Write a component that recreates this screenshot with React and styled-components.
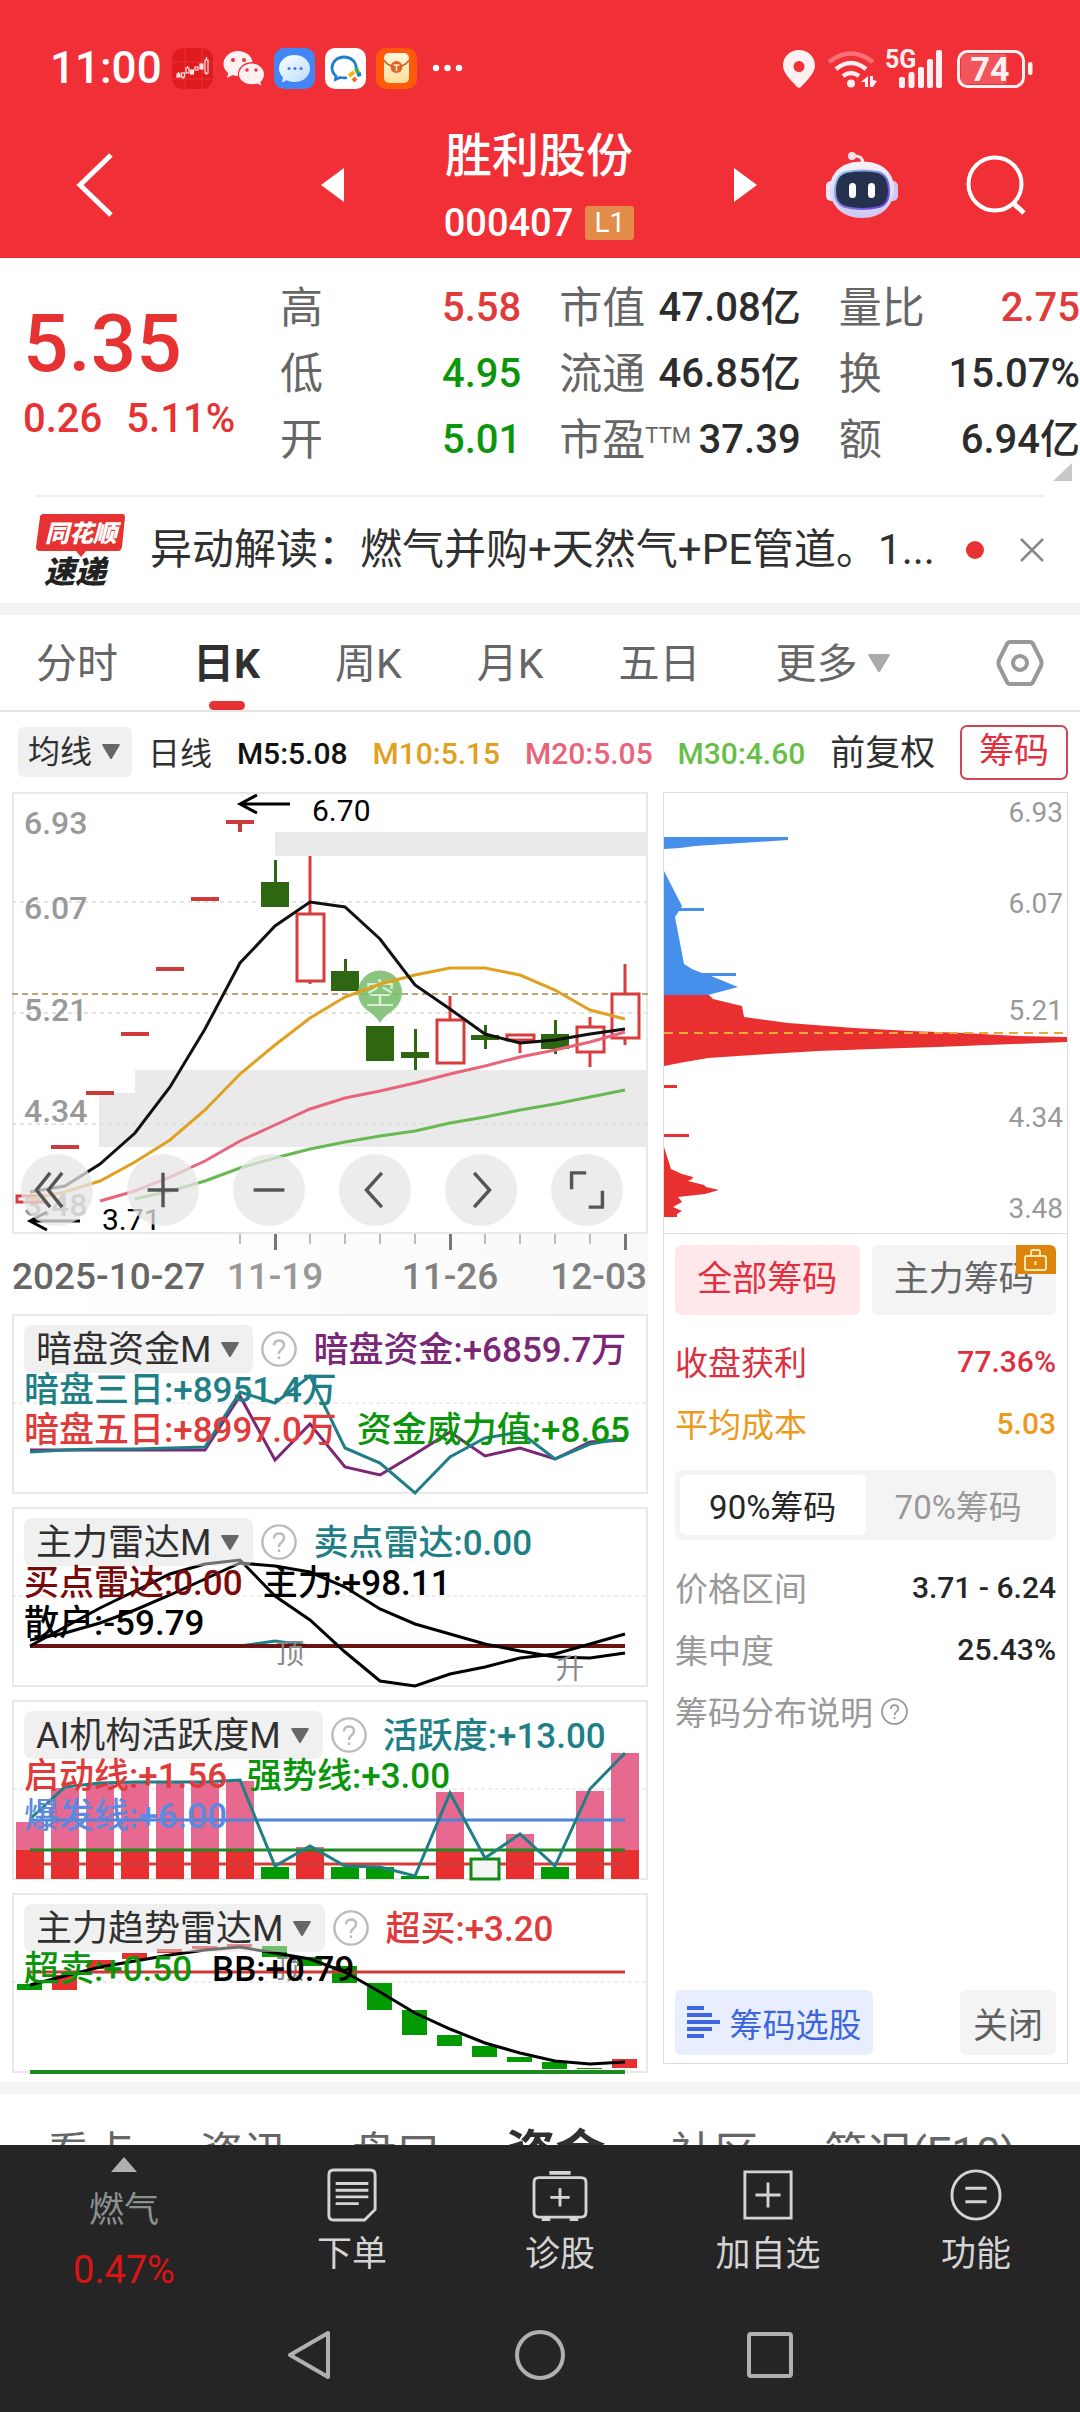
import React, { useState } from "react";
import styled, { createGlobalStyle } from "styled-components";

const GlobalStyle = createGlobalStyle`
    * {
        box-sizing: border-box;
    }

    body {
        margin: 0;
        background: #fff;
        color: #303030;
        font-family: Roboto, "Noto Sans CJK SC", sans-serif;
    }

    button {
        border: none;
        padding: 0;
        margin: 0;
        background: none;
        color: inherit;
        font: inherit;
        cursor: pointer;
    }

    svg {
        display: block;
        flex: none;
        overflow: visible;
    }
`

const RED = "#e03a3a";
const GREEN = "#0a960a";
const TEAL = "#1f7f87";

const Page = styled.div`
    display: flex;
    flex-direction: column;
    height: 100vh;
    overflow: hidden;
`

const Content = styled.main`
    flex: 1;
    min-height: 0;
    overflow: hidden;
`

/* ---------- header ---------- */

const Header = styled.header`
    background: #f12f37;
    color: #fff;
    height: 258px;
    padding-top: 48px;
`

const StatusBar = styled.div`
    display: flex;
    align-items: center;
    justify-content: space-between;
    height: 41px;
    padding: 0 46px 0 50px;
`

const StatusSide = styled.div`
    display: flex;
    align-items: center;
    gap: 10px;
`

const Clock = styled.span`
    font-size: 44px;
    line-height: 41px;
    font-weight: 500;
`

const TitleBar = styled.div`
    display: flex;
    align-items: center;
    justify-content: space-between;
    height: 146px;
    margin-top: 23px;
    padding: 0 54px 0 76px;
`

const TitleGroup = styled.div`
    display: flex;
    align-items: center;
    justify-content: space-between;
    width: 436px;
    margin-left: 138px;
`

const StockTitle = styled.div`
    padding-top: 12px;
    text-align: center;
`

const StockName = styled.h1`
    margin: 0;
    font-size: 47px;
    line-height: 60px;
    font-weight: 500;
`

const StockCode = styled.div`
    display: flex;
    align-items: center;
    justify-content: center;
    gap: 12px;
    margin-top: 4px;
    font-size: 38px;
    line-height: 66px;
    font-weight: 500;
`

const LevelTag = styled.span`
    width: 49px;
    height: 34px;
    border-radius: 3px;
    background: #e38b48;
    font-size: 28px;
    line-height: 34px;
    font-weight: 400;
    text-align: center;
`

const Tools = styled.div`
    display: flex;
    align-items: center;
    gap: 68px;
`

/* ---------- quote ---------- */

const Quote = styled.section`
    position: relative;
    display: flex;
    height: 237px;
    padding-top: 17px;
`

const PriceBlock = styled.div`
    flex: none;
    width: 280px;
    padding-left: 23px;
    color: #e63232;
`

const Price = styled.div`
    margin-top: 24px;
    font-size: 80px;
    line-height: 90px;
    font-weight: 500;
`

const Change = styled.div`
    display: flex;
    gap: 24px;
    margin-top: 5px;
    font-size: 40px;
    line-height: 50px;
    font-weight: 500;
`

const Stats = styled.dl`
    flex: 1;
    display: grid;
    grid-template-columns: repeat(3, 1fr);
    grid-auto-rows: 66px;
    column-gap: 38px;
    margin: 0;
`

const Stat = styled.div`
    display: flex;
    align-items: center;
    justify-content: space-between;
    white-space: nowrap;

    dt {
        color: #666;
        font-size: 43px;
        line-height: 60px;
    }

    sup {
        font-size: 22px;
        line-height: 22px;
        vertical-align: 12px;
    }

    dd {
        margin: 0;
        color: ${(props) => props.color || "#2c2c2c"};
        font-size: 40px;
        line-height: 60px;
        font-weight: 500;
    }
`

const Corner = styled.svg`
    position: absolute;
    right: 8px;
    bottom: 14px;
`

const News = styled.section`
    display: flex;
    align-items: center;
    height: 108px;
    margin: 0 36px;
    border-top: 2px solid #eee;
`

const NewsLink = styled.a`
    flex: 1;
    min-width: 0;
    margin-left: 24px;
    color: #303030;
    font-size: 42px;
    line-height: 60px;
    text-decoration: none;
    white-space: nowrap;
`

const Dot = styled.span`
    width: 18px;
    height: 18px;
    margin-right: 36px;
    border-radius: 50%;
    background: #e63232;
`

const Band = styled.div`
    height: 12px;
    background: #f4f4f4;
`

/* ---------- period tabs ---------- */

const Periods = styled.nav`
    display: flex;
    align-items: center;
    gap: 75px;
    height: 97px;
    padding: 0 36px;
    border-bottom: 2px solid #e6e6e6;
`

const Period = styled.button`
    position: relative;
    display: flex;
    align-items: center;
    gap: 10px;
    height: 95px;
    padding-top: 2px;
    color: ${(props) => (props.$on ? "#303030" : "#666")};
    font-size: 41px;
    line-height: 60px;
    font-weight: ${(props) => (props.$on ? 700 : 400)};
    white-space: nowrap;

    &::after {
        content: "";
        display: ${(props) => (props.$on ? "block" : "none")};
        position: absolute;
        left: 50%;
        bottom: 0;
        width: 36px;
        height: 9px;
        margin-left: -18px;
        border-radius: 5px;
        background: #e63232;
    }
`

const Gear = styled.button`
    margin-left: auto;
`

const MaRow = styled.div`
    display: flex;
    align-items: center;
    justify-content: space-between;
    height: 80px;
    padding: 0 12px 0 18px;
    font-size: 30px;
    line-height: 50px;
    white-space: nowrap;
`

const MaGroup = styled.div`
    display: flex;
    align-items: center;
    gap: 16px;
    font-size: 32px;
`

const MaPicker = styled.button`
    display: flex;
    align-items: center;
    gap: 10px;
    height: 50px;
    padding: 0 12px 0 10px;
    border-radius: 6px;
    background: #f0f0f0;
    color: #303030;
`

const MaDay = styled.span`
    padding-top: 4px;
`

const MaValue = styled.span`
    padding-top: 3px;
    color: ${(props) => props.color};
    font-weight: 500;
`

const Adjust = styled.button`
    padding-top: 4px;
    font-size: 35px;
`

const ChipToggle = styled.button`
    width: 108px;
    height: 55px;
    border: 2px solid #cf4552;
    border-radius: 7px;
    color: #e0303f;
    font-size: 35px;
`

/* ---------- charts ---------- */

const Board = styled.section`
    display: grid;
    grid-template-columns: 636fr 405fr;
    column-gap: 15px;
    padding: 0 12px 9px;
`

const Charts = styled.div`
    min-width: 0;
`

const Frame = styled.div`
    position: relative;
    box-shadow: inset 0 0 0 2px #e8e8e8;
    margin-bottom: ${(props) => props.$gap || 0}px;
`

const Plot = styled.svg`
    width: 100%;
    height: auto;
    font-family: Roboto, "Noto Sans CJK SC", sans-serif;
`

const Axis = styled(Plot)`
    background: linear-gradient(to right, #fff, #f9f9f9);
`

const ChartTools = styled.div`
    position: absolute;
    left: 0;
    right: 0;
    bottom: 8px;
    display: flex;
    justify-content: space-between;
    padding: 0 25px 0 9px;
`

const RoundButton = styled.button`
    display: flex;
    align-items: center;
    justify-content: center;
    width: 72px;
    height: 72px;
    border-radius: 50%;
    background: rgba(230, 230, 230, 0.75);
`

const Overlay = styled.div`
    position: absolute;
    left: 0;
    right: 0;
    top: 15px;
    padding-left: 12px;
    font-size: 35px;
    line-height: 40px;
    white-space: nowrap;
`

const LegendRow = styled.div`
    display: flex;
    align-items: center;
    gap: 20px;
    height: 40px;
`

const PickerGroup = styled.div`
    display: flex;
    align-items: center;
    gap: 8px;
    margin-right: -4px;
`

const IndicatorPicker = styled.button`
    display: flex;
    align-items: center;
    gap: 10px;
    height: 48px;
    padding: 2px 14px 0 12px;
    border-radius: 8px;
    background: rgba(226, 226, 226, 0.5);
    color: #303030;
    font-size: 36px;
`

/* ---------- chip panel ---------- */

const ChipPanel = styled.aside`
    display: flex;
    flex-direction: column;
    min-width: 0;
    margin-bottom: 9px;
    border: 1px solid #ddd;
`

const ChipBody = styled.div`
    flex: 1;
    display: flex;
    flex-direction: column;
    padding: 11px 11px 8px;
    border-top: 1px solid #ddd;
`

const ChipTabs = styled.div`
    display: grid;
    grid-template-columns: 1fr 1fr;
    gap: 12px;
    margin-bottom: 15px;
`

const ChipTab = styled.button`
    position: relative;
    height: 70px;
    border-radius: 6px;
    background: ${(props) => (props.$on ? "#ffe8ea" : "#f4f4f4")};
    color: ${(props) => (props.$on ? "#e0303f" : "#666")};
    font-size: 35px;
    line-height: 70px;
`

const Lock = styled.span`
    position: absolute;
    top: 0;
    right: 0;
    display: flex;
    align-items: center;
    justify-content: center;
    width: 40px;
    height: 29px;
    border-radius: 0 6px 0 0;
    background: #dc840c;
`

const ChipRow = styled.div`
    display: flex;
    align-items: center;
    justify-content: space-between;
    height: 62px;
    color: ${(props) => props.color || "#999"};
    font-size: 33px;

    strong {
        color: ${(props) => props.color || "#262626"};
        font-size: 30px;
        font-weight: 500;
    }
`

const Note = styled.button`
    display: flex;
    align-items: center;
    gap: 8px;
`

const Segment = styled.div`
    display: grid;
    grid-template-columns: 1fr 1fr;
    height: 70px;
    margin: 16px 0;
    padding: 5px;
    border-radius: 8px;
    background: #f4f4f4;
`

const SegmentItem = styled.button`
    border-radius: 5px;
    background: ${(props) => (props.$on ? "#fff" : "none")};
    color: ${(props) => (props.$on ? "#262626" : "#999")};
    font-size: 33px;
`

const ChipFooter = styled.div`
    display: flex;
    justify-content: space-between;
    margin-top: auto;
`

const PickStock = styled.button`
    display: flex;
    align-items: center;
    justify-content: center;
    gap: 10px;
    width: 198px;
    height: 65px;
    border-radius: 6px;
    background: #e8eefe;
    color: #3d66dc;
    font-size: 33px;
`

const Close = styled.button`
    width: 96px;
    height: 65px;
    border-radius: 6px;
    background: #f4f4f4;
    color: #606060;
    font-size: 35px;
`

/* ---------- bottom ---------- */

const Sections = styled.nav`
    display: flex;
    align-items: center;
    justify-content: space-between;
    height: 120px;
    padding: 0 64px 0 46px;
`

const SectionTab = styled.button`
    color: ${(props) => (props.$on ? "#303030" : "#666")};
    font-size: ${(props) => (props.$on ? 50 : 44)}px;
    line-height: 72px;
    font-weight: ${(props) => (props.$on ? 700 : 400)};
`

const Dock = styled.footer`
    flex: none;
    background: #252525;
    color: #d4d4d4;
`

const DockRow = styled.nav`
    display: grid;
    grid-template-columns: 248fr repeat(4, 208fr);
    height: 156px;
`

const DockItem = styled.button`
    display: flex;
    flex-direction: column;
    align-items: center;
    padding-top: 24px;
    font-size: 35px;
    line-height: 50px;

    svg {
        margin-bottom: 9px;
    }
`

const Sector = styled.button`
    display: flex;
    flex-direction: column;
    align-items: center;
    padding-top: 12px;
    color: #8a928e;
    font-size: 35px;
    line-height: 50px;

    strong {
        margin-top: 9px;
        color: #dc1414;
        font-size: 38px;
        font-weight: 400;
    }

    svg {
        margin-bottom: 14px;
    }
`

const SystemNav = styled.div`
    display: flex;
    align-items: center;
    justify-content: center;
    gap: 180px;
    height: 111px;
    padding-bottom: 4px;
`

const SystemButton = styled.button`
    width: 50px;
    height: 50px;
`

/* ---------- icons ---------- */

function Caret({ size = 18, color = "#666" }) {
    return (
        <svg width={size} height={size * 0.85} viewBox="0 0 20 17">
            <path d="M1 0h18q1.4 0.3 0.6 1.6L11 16q-1 1.4-2 0L0.4 1.6Q-0.4 0.3 1 0z" fill={color} />
        </svg>
    )
}

function Help({ size = 36, color = "#bbb" }) {
    return (
        <svg width={size} height={size} viewBox="0 0 36 36" fill="none" stroke={color} strokeWidth="2.4">
            <circle cx="18" cy="18" r="16.6" />
            <path d="M13 14.5q0-5 5-5t5 4.6q0 2.6-2.6 4.4t-2.4 4.5" />
            <path d="M18 25.4v2.6" />
        </svg>
    )
}

function AppIcons() {
    return (
        <svg width="292" height="41" viewBox="0 0 292 41">
            <defs>
                <linearGradient id="bubble" x1="0" y1="0" x2="1" y2="1">
                    <stop offset="0" stopColor="#fff" />
                    <stop offset="1" stopColor="#b9dcff" />
                </linearGradient>
                <linearGradient id="letter" x1="0" y1="0" x2="0" y2="1">
                    <stop offset="0" stopColor="#fff6dc" />
                    <stop offset="1" stopColor="#ffdf9a" />
                </linearGradient>
            </defs>
            <rect width="41" height="41" rx="11" fill="#e01b1f" />
            <path d="M0 14h41M0 31h41M13 0v41M30 0v41" stroke="#e73434" strokeWidth="1" />
            <g stroke="#ffe3e0" strokeWidth="1.2" fill="none">
                <rect x="5" y="26" width="3" height="3" fill="#ffe3e0" />
                <rect x="9.5" y="25" width="3" height="4" />
                <path d="M11 29v2M6.5 24v2" />
                <rect x="14" y="20" width="3" height="5" />
                <path d="M15.5 18v2" />
                <rect x="18.5" y="22" width="3" height="4" fill="#ffe3e0" />
                <rect x="23" y="19" width="3" height="3" />
                <rect x="28" y="16" width="3" height="5" fill="#ffe3e0" />
                <rect x="33" y="12" width="3" height="13" />
                <path d="M34.5 9v3M34.5 25v2" />
            </g>
            <g fill="#fff1f2">
                <path d="M66 3c8 0 14 5 14.5 11-9 0-15.5 6-14.500 14-2 0-4-.2-5.500-.8L55 30l1.200-5C53 22.500 51.500 19.500 51.500 16 51.500 9 58 3 66 3z" />
                <path d="M79.500 15.500c7 0 12.500 4.800 12.500 10.800 0 3.200-1.400 5.800-3.700 7.700l1 3.500-4.200-2c-1.700.6-3.500.8-5.600.8-7 0-12.500-4.400-12.500-10s5.500-10.800 12.500-10.800z" />
            </g>
            <g fill="#f12f37">
                <circle cx="61" cy="12" r="2" />
                <circle cx="72" cy="12" r="2" />
                <circle cx="75" cy="22" r="1.7" />
                <circle cx="84" cy="22" r="1.7" />
            </g>
            <rect x="102" width="41" height="41" rx="10" fill="#4285f4" />
            <path d="M122.500 7c9 0 15.500 6 15.500 13.500S131.500 34 122.500 34c-3 0-5.500-.6-8-1.800l-4.500 2.200 1-5c-2.500-2.400-4-5.400-4-8.900C107 13 113.500 7 122.500 7z" fill="url(#bubble)" />
            <g fill="#3f7ee0">
                <circle cx="117" cy="20.5" r="1.6" />
                <circle cx="123" cy="20.5" r="1.6" />
                <circle cx="129" cy="20.5" r="1.6" />
            </g>
            <rect x="153" width="41" height="41" rx="10" fill="#fff" />
            <path d="M184 20c.5-6-5-11-12-11s-12 5-12 11c0 3.500 1.600 6 4 8l-.5 3.500 4.500-2c3 .7 5 .6 7 0" fill="none" stroke="#1c7fd0" strokeWidth="2.8" />
            <path d="M184 20l2 5" stroke="#3fae49" strokeWidth="4" />
            <path d="M177 28l5-4" stroke="#f7b500" strokeWidth="4" />
            <path d="M181 33l3-3" stroke="#f0642d" strokeWidth="4" />
            <path d="M185 27l4-1" stroke="#1c7fd0" strokeWidth="4" />
            <rect x="204" width="41" height="41" rx="10" fill="#ff5a0a" />
            <rect x="212" y="5" width="25" height="30" rx="5" fill="url(#letter)" />
            <path d="M212 12q3 5 8 6M237 12q-3 5-8 6" fill="none" stroke="#c8662a" strokeWidth="1.5" />
            <circle cx="224.5" cy="19" r="6" fill="#dc6428" />
            <path d="M221.500 17h6M224.500 17v6" stroke="#ffe7b8" strokeWidth="1.6" />
            <g fill="#fff">
                <circle cx="264" cy="20" r="3.2" />
                <circle cx="275.5" cy="20" r="3.2" />
                <circle cx="287" cy="20" r="3.2" />
            </g>
        </svg>
    )
}

function StatusIcons() {
    return (
        <svg width="252" height="38" viewBox="0 0 252 38" fill="#fff1f2">
            <path fillRule="evenodd" d="M17 0c9 0 16 6.500 16 15.500C33 24 23 32 19 37q-2 1.500-4 0C11 32 1 24 1 15.500 1 6.500 8 0 17 0zm0 11a5.500 5.500 0 1 0 0 11 5.500 5.500 0 0 0 0-11z" />
            <g fill="none" stroke="#fff1f2" strokeWidth="4.5">
                <path d="M47 12q22-17 44 0" opacity="0.35" />
                <path d="M54 19q15-12 30 0" />
                <path d="M61 26q8-6 16 0" />
            </g>
            <circle cx="69" cy="33.5" r="4" />
            <path d="M86 26v11h-3v-5l-4 0zM88 37V26l0 0h3v4l4 1-4 6z" />
            <text x="103" y="18" fontSize="25" fontWeight="700" fontFamily="Roboto, sans-serif">5G</text>
            <rect x="117" y="27" width="6" height="11" rx="2" />
            <rect x="126.5" y="22" width="6" height="16" rx="2" />
            <rect x="136" y="17" width="6" height="21" rx="2" />
            <rect x="145" y="9" width="6" height="29" rx="2" />
            <rect x="154" y="0" width="6" height="38" rx="2" />
            <rect x="179" y="4" width="46" height="30" rx="4" opacity="0.2" />
            <rect x="176.5" y="1.5" width="65" height="35" rx="9" fill="none" stroke="#fff1f2" strokeWidth="3" />
            <text x="208" y="31" fontSize="34" fontWeight="700" textAnchor="middle" fontFamily="Roboto, sans-serif">74</text>
            <rect x="246" y="12" width="4.5" height="13" rx="2" />
        </svg>
    )
}

function Robot() {
    return (
        <svg width="72" height="66" viewBox="0 0 72 66">
            <defs>
                <linearGradient id="shell" x1="0" y1="0" x2="0" y2="1">
                    <stop offset="0" stopColor="#f8f2fb" />
                    <stop offset="1" stopColor="#cdc8f3" />
                </linearGradient>
                <linearGradient id="rim" x1="0" y1="0" x2="1" y2="1">
                    <stop offset="0" stopColor="#8fd3e6" />
                    <stop offset="1" stopColor="#6a35d8" />
                </linearGradient>
            </defs>
            <path d="M27 4q10-1 10 8" fill="none" stroke="#f2e4f2" strokeWidth="3" />
            <circle cx="26" cy="4" r="4" fill="#f6dfe8" />
            <rect x="0" y="29" width="12" height="20" rx="5" fill="#ece6f8" />
            <rect x="60" y="29" width="12" height="20" rx="5" fill="#cfc6f2" />
            <path d="M36 9.500c20 0 32 11 32 27 0 17-12 29.500-32 29.500S4 53.500 4 36.500c0-16 12-27 32-27z" fill="url(#shell)" />
            <path d="M20 20q16-3 32 0 11 3 11 19 0 13-10 16-17 4-34 0Q9 52 9 39q0-16 11-19z" fill="#26304f" stroke="url(#rim)" strokeWidth="2" />
            <rect x="23" y="31" width="7" height="15" rx="3.5" fill="#fff" />
            <rect x="42" y="31" width="7" height="15" rx="3.5" fill="#fff" />
        </svg>
    )
}

/* ---------- chart data (y values on each plot's own scale) ---------- */

const x = (i) => 18 + 35 * i;
const line = (ys, from = 0) => ys.map((y, i) => `${x(i + from)},${y}`).join(" ");

const candles = [
    { i: 0, type: "up", top: 404, bottom: 410, high: 404, low: 410 },
    { i: 1, type: "flat", top: 355 },
    { i: 2, type: "flat", top: 301 },
    { i: 3, type: "flat", top: 242 },
    { i: 4, type: "flat", top: 177 },
    { i: 5, type: "flat", top: 107 },
    { i: 6, type: "flat", top: 30, low: 40 },
    { i: 7, type: "down", top: 90, bottom: 115, high: 68, low: 115 },
    { i: 8, type: "up", top: 122, bottom: 189, high: 64, low: 192 },
    { i: 9, type: "down", top: 179, bottom: 199, high: 167, low: 199 },
    { i: 10, type: "down", top: 234, bottom: 269, high: 234, low: 269 },
    { i: 11, type: "down", top: 260, bottom: 266, high: 237, low: 278 },
    { i: 12, type: "up", top: 228, bottom: 271, high: 204, low: 271 },
    { i: 13, type: "down", top: 243, bottom: 248, high: 233, low: 257 },
    { i: 14, type: "up", top: 243, bottom: 248, high: 243, low: 261 },
    { i: 15, type: "down", top: 242, bottom: 257, high: 228, low: 262 },
    { i: 16, type: "up", top: 235, bottom: 260, high: 225, low: 275 },
    { i: 17, type: "up", top: 202, bottom: 246, high: 172, low: 253 },
]

const averages = [
    { color: "#e0a020", from: 0, ys: [407, 400, 389, 370, 348, 318, 282, 253, 226, 205, 192, 183, 176, 176, 183, 198, 218, 227] },
    { color: "#111", from: 0, ys: [400, 394, 372, 341, 295, 237, 171, 134, 110, 115, 147, 193, 217, 242, 251, 248, 242, 237] },
    { color: "#e8647a", from: 2, ys: [409, 399, 385, 369, 349, 333, 317, 306, 299, 291, 282, 274, 265, 258, 250, 240] },
    { color: "#67b952", from: 3, ys: [407, 399, 389, 376, 366, 357, 350, 344, 339, 331, 325, 318, 312, 305, 298] },
]

const priceLabels = [["6.93", 42], ["6.07", 127], ["5.21", 229], ["4.34", 330], ["3.48", 424]]
const chipLabels = [["6.93", 29], ["6.07", 120], ["5.21", 227], ["4.34", 334], ["3.48", 425]]

const activity = [122, 88, 83, 83, 83, 83, 81, 0, 147, 0, 0, 0, 92, 0, 134, 0, 91, 53]
const quiet = { 7: 167, 9: 167, 10: 167, 11: 176, 15: 167 }

const trend = [
    ["g", 91, 97], ["r", 82, 97], ["r", 67, 76], ["r", 60, 66], ["r", 56, 60], ["r", 53, 56],
    ["r", 51, 54], ["g", 53, 64], ["g", 64, 73], ["g", 73, 90], ["g", 90, 117], ["g", 117, 142],
    ["g", 142, 153], ["g", 153, 164], ["g", 164, 169], ["g", 169, 176], ["g", 175, 176], ["r", 166, 175],
]

const stats = [
    { label: "高", value: "5.58", color: RED },
    { label: "市值", value: "47.08亿" },
    { label: "量比", value: "2.75", color: RED },
    { label: "低", value: "4.95", color: GREEN },
    { label: "流通", value: "46.85亿" },
    { label: "换", value: "15.07%" },
    { label: "开", value: "5.01", color: GREEN },
    { label: "市盈", sup: "TTM", value: "37.39" },
    { label: "额", value: "6.94亿" },
]

function Candle({ i, type, top, bottom, high, low }) {
    const cx = x(i);
    if (type === "flat") {
        return (
            <g fill="#cc3a3a">
                <rect x={cx - 14} y={top - 2} width="28" height="4" />
                {low && <rect x={cx - 2} y={top} width="4" height={low - top} />}
            </g>
        )
    }
    if (type === "down") {
        return (
            <g fill="#2f6612">
                <rect x={cx - 1} y={high} width="3" height={low - high} />
                <rect x={cx - 14} y={top} width="28" height={bottom - top} />
            </g>
        )
    }
    return (
        <g stroke="#d83c3c" strokeWidth="3" fill="none">
            <path d={`M${cx} ${high}V${top}M${cx} ${bottom}V${low}`} />
            <rect x={cx - 13} y={top} width="27" height={bottom - top} />
        </g>
    )
}

function KLine() {
    return (
        <Plot viewBox="0 0 636 442">
            <path d="M263 40H636V64H263zM123 278H636V355H87V301H123z" fill="#eaeaea" />
            <path d="M0 110H636M0 221H636M0 332H636" stroke="#e2e2e2" strokeWidth="2" strokeDasharray="4 4" />
            <path d="M0 202H636" stroke="#bba673" strokeWidth="2" strokeDasharray="6 4" />
            {priceLabels.map(([label, y]) => (
                <text key={label} x="12" y={y} fontSize="32" fontWeight="500" fill="#999">{label}</text>
            ))}
            {candles.map((candle) => <Candle key={candle.i} {...candle} />)}
            <path d="M368 231Q364 224 356 219A22 22 0 1 1 380 219Q372 224 368 231z" fill="#7cbf70" opacity="0.9" />
            <text x="368" y="212" fontSize="30" textAnchor="middle" fill="#d8efd4">空</text>
            {averages.map((avg) => (
                <polyline key={avg.color} points={line(avg.ys, avg.from)} fill="none" stroke={avg.color} strokeWidth="3" />
            ))}
            <path d="M278 12H228M245 3L228 12L245 21M68 429H18M35 420L18 429L35 438" fill="none" stroke="#000" strokeWidth="3" />
            <text x="300" y="29" fontSize="30">6.70</text>
            <text x="90" y="438" fontSize="30">3.71</text>
        </Plot>
    )
}

function DateAxis() {
    const ticks = [6, 7, 8, 9, 10, 11, 12, 13, 14, 15, 16, 17]
    return (
        <Axis viewBox="0 0 636 80" fontSize="37" fontWeight="500">
            {ticks.map((i) => (
                <rect key={i} x={x(i) - 1} y="0" width={i % 5 === 2 ? 3 : 2} height={i % 5 === 2 ? 16 : 10} fill={i % 5 === 2 ? "#777" : "#bbb"} />
            ))}
            <text x="0" y="55" fill="#666">2025-10-27</text>
            <text x="263" y="55" fill="#999" textAnchor="middle">11-19</text>
            <text x="438" y="55" fill="#808080" textAnchor="middle">11-26</text>
            <text x="635" y="55" fill="#808080" textAnchor="end">12-03</text>
        </Axis>
    )
}

function Indicator({ name, rows, gap, children }) {
    return (
        <Frame $gap={gap}>
            <Plot viewBox="0 0 636 180">
                <path d="M0 89H636" stroke="#ddd" strokeWidth="1" strokeDasharray="4 3" />
                {children}
            </Plot>
            <Overlay>
                {rows.map((row, i) => (
                    <LegendRow key={i}>
                        {i === 0 && (
                            <PickerGroup>
                                <IndicatorPicker>{name}<Caret /></IndicatorPicker>
                                <Help />
                            </PickerGroup>
                        )}
                        {row.map(([text, color]) => <MaValue key={text} color={color}>{text}</MaValue>)}
                    </LegendRow>
                ))}
            </Overlay>
        </Frame>
    )
}

function Indicators() {
    return (
        <>
            <Indicator
                name="暗盘资金M"
                gap={13}
                rows={[
                    [["暗盘资金:+6859.7万", "#7b2676"]],
                    [["暗盘三日:+8951.4万", TEAL]],
                    [["暗盘五日:+8997.0万", RED], ["资金威力值:+8.65", GREEN]],
                ]}
            >
                <g fill="none" strokeWidth="3">
                    <polyline points={line([136, 136, 136, 136, 136, 136, 82, 146, 110, 153, 161, 140, 118, 142, 134, 145, 128, 126])} stroke="#7b2676" />
                    <polyline points={line([138, 136, 135, 135, 134, 133, 78, 89, 62, 134, 149, 179, 143, 124, 118, 145, 130, 124])} stroke={TEAL} />
                </g>
            </Indicator>
            <Indicator
                name="主力雷达M"
                gap={13}
                rows={[
                    [["卖点雷达:0.00", TEAL]],
                    [["买点雷达:0.00", "#7a0a0a"], ["主力:+98.11", "#000"]],
                    [["散户:-59.79", "#000"]],
                ]}
            >
                <path d={`M${x(6)} 139L${x(7)} 134L${x(8)} 139`} fill="none" stroke={TEAL} strokeWidth="3" />
                <path d="M18 139H613" stroke="#6b1414" strokeWidth="4" />
                <g fill="none" stroke="#000" strokeWidth="3">
                    <polyline points={line([139, 120, 101, 84, 67, 57, 53, 89, 113, 145, 174, 179, 167, 160, 151, 147, 137, 127])} />
                    <polyline points={line([133, 126, 116, 103, 88, 72, 56, 59, 65, 80, 102, 117, 127, 137, 144, 150, 151, 146])} />
                </g>
                <text x="264" y="157" fontSize="28" fill="#888">顶</text>
                <text x="544" y="172" fontSize="28" fill="#888">升</text>
            </Indicator>
            <Indicator
                name="AI机构活跃度M"
                gap={13}
                rows={[
                    [["活跃度:+13.00", TEAL]],
                    [["启动线:+1.56", RED], ["强势线:+3.00", GREEN]],
                    [["爆发线:+6.00", "#5b8ae0"]],
                ]}
            >
                {activity.map((top, i) => top > 0 && (
                    <g key={i}>
                        <rect x={x(i) - 14} y={top} width="28" height={179 - top} fill="#e8698f" />
                        <rect x={x(i) - 14} y="150" width="28" height="29" fill="#e83030" />
                    </g>
                ))}
                {Object.keys(quiet).map((i) => (
                    <rect key={i} x={x(Number(i)) - 14} y={quiet[i]} width="28" height={179 - quiet[i]} fill="#049a04" />
                ))}
                <path d="M18 164H613" stroke="#d43c3c" strokeWidth="3" />
                <rect x={x(13) - 14} y="159" width="28" height="20" fill="#f4f4f4" stroke="#128a12" strokeWidth="3" />
                <path d="M18 120H613" stroke="#4d84dc" strokeWidth="3" />
                <path d="M18 150H613" stroke="#1f8a1f" strokeWidth="3" />
                <polyline points={line([119, 87, 83, 82, 82, 82, 80, 166, 146, 166, 167, 176, 93, 158, 134, 166, 89, 53])} fill="none" stroke={TEAL} strokeWidth="3" />
            </Indicator>
            <Indicator
                name="主力趋势雷达M"
                rows={[
                    [["超买:+3.20", RED]],
                    [["超卖:+0.50", GREEN], ["BB:+0.79", "#000"]],
                ]}
            >
                {trend.map(([kind, top, bottom], i) => (
                    <rect key={i} x={x(i) - 13} y={top} width="25" height={bottom - top} fill={kind === "r" ? "#e83030" : "#049a04"} />
                ))}
                <text x="264" y="86" fontSize="28" fill="#888">顶</text>
                <path d="M18 79H613" stroke="#cc3a3a" strokeWidth="3" />
                <path d="M18 179H613" stroke="#1f8a1f" strokeWidth="4" />
                <polyline points={line([92, 83, 74, 68, 62, 57, 54, 60, 66, 79, 99, 120, 136, 150, 160, 168, 171, 169])} fill="none" stroke="#000" strokeWidth="3" />
            </Indicator>
        </>
    )
}

function ChipChart() {
    return (
        <Plot viewBox="0 0 403 440">
            <g fill="#4690ec">
                <path d="M0 44H124V47L93 49 62 51 31 53 16 55 0 56z" />
                <path d="M0 78L18 113 17 115H40V118H15L11 124 20 171 28 176 38 180H72V183H47L74 194 44 202H0z" />
            </g>
            <g fill="#e83030">
                <path d="M0 202H45L49 206 78 213 80 224 124 230 190 235 246 238 299 240 354 243 403 244V249L349 251 273 254 209 256 154 258 104 261 44 265 21 269 0 273z" />
                <path d="M0 292H13V295H0zM0 341H25V344H0z" />
                <path d="M0 354L7 376 18 381 29 384 28 386 24 388 40 392 42 394 55 397 41 401 14 404 18 409 9 414 18 418 13 421V424H0z" />
            </g>
            <path d="M0 240H403" stroke="#e8a83a" strokeWidth="2" strokeDasharray="9 6" />
            {chipLabels.map(([label, y]) => (
                <text key={label} x="399" y={y} fontSize="28" textAnchor="end" fill="#999">{label}</text>
            ))}
        </Plot>
    )
}

function Chips() {
    const [range, setRange] = useState("90%筹码");

    return (
        <ChipPanel>
            <ChipChart />
            <ChipBody>
                <ChipTabs>
                    <ChipTab $on>全部筹码</ChipTab>
                    <ChipTab>
                        主力筹码
                        <Lock>
                            <svg width="24" height="22" viewBox="0 0 24 22" fill="none" stroke="#ffe9b0" strokeWidth="2">
                                <rect x="1" y="7" width="21" height="14" rx="2" />
                                <path d="M7 7V3q0-2 2-2h5q2 0 2 2v4M11.500 12v4" />
                            </svg>
                        </Lock>
                    </ChipTab>
                </ChipTabs>
                <ChipRow color="#dc303f">收盘获利<strong>77.36%</strong></ChipRow>
                <ChipRow color="#eb9a20">平均成本<strong>5.03</strong></ChipRow>
                <Segment>
                    {["90%筹码", "70%筹码"].map((item) => (
                        <SegmentItem key={item} $on={item === range} onClick={() => setRange(item)}>{item}</SegmentItem>
                    ))}
                </Segment>
                <ChipRow>价格区间<strong>3.71 - 6.24</strong></ChipRow>
                <ChipRow>集中度<strong>25.43%</strong></ChipRow>
                <ChipRow><Note>筹码分布说明<Help size={27} color="#999" /></Note></ChipRow>
                <ChipFooter>
                    <PickStock>
                        <svg width="33" height="33" viewBox="0 0 33 33" fill="none" stroke="#3d66e0" strokeWidth="4">
                            <path d="M0 2h17M0 9h25M0 16h33M0 23h25M0 30h17" />
                        </svg>
                        筹码选股
                    </PickStock>
                    <Close>关闭</Close>
                </ChipFooter>
            </ChipBody>
        </ChipPanel>
    )
}

function TopBar() {
    return (
        <Header>
            <StatusBar>
                <StatusSide>
                    <Clock>11:00</Clock>
                    <AppIcons />
                </StatusSide>
                <StatusIcons />
            </StatusBar>
            <TitleBar>
                <button aria-label="返回">
                    <svg width="38" height="64" viewBox="0 0 38 64" fill="none" stroke="#fff" strokeWidth="5">
                        <path d="M35 2L4 32 35 62" />
                    </svg>
                </button>
                <TitleGroup>
                    <button aria-label="上一只">
                        <svg width="23" height="34" viewBox="0 0 23 34"><path d="M23 0v34L0 17z" fill="#fff" /></svg>
                    </button>
                    <StockTitle>
                        <StockName>胜利股份</StockName>
                        <StockCode>000407<LevelTag>L1</LevelTag></StockCode>
                    </StockTitle>
                    <button aria-label="下一只">
                        <svg width="23" height="34" viewBox="0 0 23 34"><path d="M0 0v34l23-17z" fill="#fff" /></svg>
                    </button>
                </TitleGroup>
                <Tools>
                    <button aria-label="助手"><Robot /></button>
                    <button aria-label="搜索">
                        <svg width="60" height="60" viewBox="0 0 60 60" fill="none" stroke="#fff" strokeWidth="4">
                            <circle cx="29" cy="29" r="26.5" />
                            <path d="M47 48l11 10" strokeWidth="5" />
                        </svg>
                    </button>
                </Tools>
            </TitleBar>
        </Header>
    )
}

function QuoteBlock() {
    return (
        <Quote>
            <PriceBlock>
                <Price>5.35</Price>
                <Change><span>0.26</span><span>5.11%</span></Change>
            </PriceBlock>
            <Stats>
                {stats.map((stat) => (
                    <Stat key={stat.label} color={stat.color}>
                        <dt>{stat.label}{stat.sup && <sup>{stat.sup}</sup>}</dt>
                        <dd>{stat.value}</dd>
                    </Stat>
                ))}
            </Stats>
            <Corner width="19" height="18" viewBox="0 0 19 18"><path d="M19 0v18H0z" fill="#c8c8c8" /></Corner>
        </Quote>
    )
}

function NewsBar() {
    return (
        <News>
            <svg width="90" height="74" viewBox="0 0 90 74" fontFamily="Noto Sans CJK SC, sans-serif" fontWeight="900" fontStyle="italic">
                <path d="M8 1h78q3 0 3 3l-3 30q-1 4-4 4H50l-5 6-5-6H4q-4 0-4-4L4 4q0-3 4-3z" fill="#e63232" />
                <text x="9" y="29" fontSize="24" fill="#fff">同花顺</text>
                <text x="8" y="70" fontSize="31" fill="#222">速递</text>
            </svg>
            <NewsLink href="#news">异动解读：燃气并购+天然气+PE管道。1...</NewsLink>
            <Dot />
            <button aria-label="关闭资讯">
                <svg width="24" height="24" viewBox="0 0 24 24" stroke="#888" strokeWidth="2.5">
                    <path d="M1 1l22 22M23 1L1 23" />
                </svg>
            </button>
        </News>
    )
}

function PeriodBar() {
    const [period, setPeriod] = useState("日K");

    return (
        <>
            <Periods>
                {["分时", "日K", "周K", "月K", "五日"].map((item) => (
                    <Period key={item} $on={item === period} onClick={() => setPeriod(item)}>{item}</Period>
                ))}
                <Period>更多<Caret size={22} color="#aaa" /></Period>
                <Gear aria-label="设置">
                    <svg width="48" height="46" viewBox="0 0 48 46" fill="none" stroke="#999" strokeWidth="4" strokeLinejoin="round">
                        <path d="M14 2h20q2 0 3 2l8 16q1 3 0 6l-8 16q-1 2-3 2H14q-2 0-3-2L3 26q-1-3 0-6l8-16q1-2 3-2z" />
                        <circle cx="24" cy="23" r="7" />
                    </svg>
                </Gear>
            </Periods>
            <MaRow>
                <MaGroup>
                    <MaPicker>均线<Caret /></MaPicker>
                    <MaDay>日线</MaDay>
                </MaGroup>
                <MaValue color="#111">M5:5.08</MaValue>
                <MaValue color="#e0a020">M10:5.15</MaValue>
                <MaValue color="#e8647a">M20:5.05</MaValue>
                <MaValue color="#67bf48">M30:4.60</MaValue>
                <Adjust>前复权</Adjust>
                <ChipToggle>筹码</ChipToggle>
            </MaRow>
        </>
    )
}

const toolPaths = [
    ["快退", "M34 8L18 28 34 48M20 8L4 28 20 48"],
    ["放大", "M10 28H46M28 8V48"],
    ["缩小", "M10 28H46"],
    ["向左", "M36 8L18 28 36 48"],
    ["向右", "M20 8L38 28 20 48"],
    ["全屏", "M10 27V8H27M46 29V48H30"],
]

function BottomBar() {
    const icon = { fill: "none", stroke: "#d4d4d4", strokeWidth: 3, height: 52, viewBox: "0 0 58 54", width: 56 };
    return (
        <Dock>
            <DockRow>
                <Sector>
                    <svg width="26" height="15" viewBox="0 0 26 15"><path d="M13 0l13 15H0z" fill="#b0b0b0" /></svg>
                    燃气
                    <strong>0.47%</strong>
                </Sector>
                <DockItem>
                    <svg {...icon}>
                        <path d="M10 1h38q5 0 5 5V42L42 53H10q-5 0-5-5V6q0-5 5-5zM12 15h34M12 22h34M12 29h34M12 36h24" />
                    </svg>
                    下单
                </DockItem>
                <DockItem>
                    <svg {...icon}>
                        <path d="M7 9h44q5 0 5 5v31q0 5-5 5H7q-5 0-5-5V14q0-5 5-5zM29 20v19M19 29.500h20" />
                        <path d="M18 4h22M10 52h9M39 52h9" strokeWidth="4" />
                    </svg>
                    诊股
                </DockItem>
                <DockItem>
                    <svg {...icon}>
                        <path d="M5 3h48v48H5zM29 14v26M16 27h26" />
                    </svg>
                    加自选
                </DockItem>
                <DockItem>
                    <svg {...icon}>
                        <circle cx="29" cy="27" r="25" />
                        <path d="M18 20h22M18 34h22" />
                    </svg>
                    功能
                </DockItem>
            </DockRow>
            <SystemNav>
                <SystemButton aria-label="后退">
                    <svg width="50" height="50" viewBox="0 0 50 50" fill="none" stroke="#b0b0b0" strokeWidth="4" strokeLinejoin="round">
                        <path d="M43 3v44L5 25z" />
                    </svg>
                </SystemButton>
                <SystemButton aria-label="主屏">
                    <svg width="50" height="50" viewBox="0 0 50 50" fill="none" stroke="#b0b0b0" strokeWidth="4">
                        <circle cx="25" cy="25" r="23" />
                    </svg>
                </SystemButton>
                <SystemButton aria-label="最近任务">
                    <svg width="50" height="50" viewBox="0 0 50 50" fill="none" stroke="#b0b0b0" strokeWidth="4">
                        <rect x="4" y="4" width="42" height="42" rx="2" />
                    </svg>
                </SystemButton>
            </SystemNav>
        </Dock>
    )
}

function App() {
    return (
        <Page lang="zh-CN">
            <GlobalStyle />
            <Content>
                <TopBar />
                <QuoteBlock />
                <NewsBar />
                <Band />
                <PeriodBar />
                <Board>
                    <Charts>
                        <Frame>
                            <KLine />
                            <ChartTools>
                                {toolPaths.map(([label, d]) => (
                                    <RoundButton key={label} aria-label={label}>
                                        <svg width="48" height="48" viewBox="0 0 56 56" fill="none" stroke="#555" strokeWidth="4">
                                            <path d={d} />
                                        </svg>
                                    </RoundButton>
                                ))}
                            </ChartTools>
                        </Frame>
                        <DateAxis />
                        <Indicators />
                    </Charts>
                    <Chips />
                </Board>
                <Band />
                <Sections>
                    {["看点", "资讯", "盘口", "资金", "社区", "简况(F10)"].map((item) => (
                        <SectionTab key={item} $on={item === "资金"}>{item}</SectionTab>
                    ))}
                </Sections>
            </Content>
            <BottomBar />
        </Page>
    )
}

export default App;
